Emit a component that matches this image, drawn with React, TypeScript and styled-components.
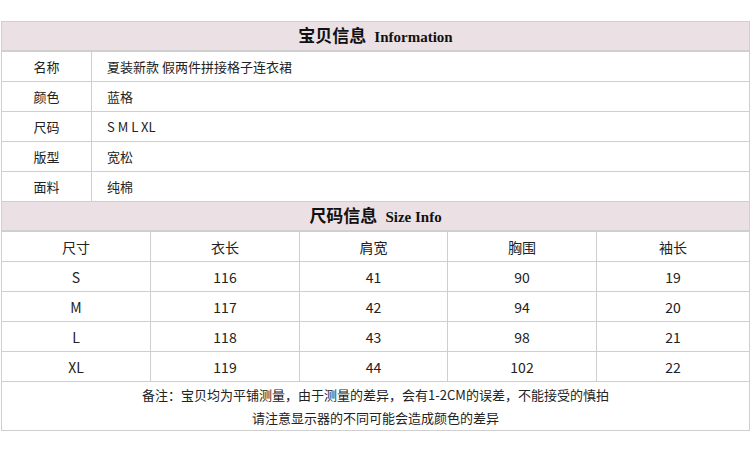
import styled, { createGlobalStyle } from 'styled-components'

const GlobalStyle = createGlobalStyle`
body {
  margin: 0;
  background: #fff;
  font-family: "Noto Sans CJK SC", "Noto Sans", sans-serif;
  color: #222;
}
`

const info = [
    ['名称', '夏装新款 假两件拼接格子连衣裙'],
    ['颜色', '蓝格'],
    ['尺码', 'S M L XL'],
    ['版型', '宽松'],
    ['面料', '纯棉'],
]

const sizeHead = ['尺寸', '衣长', '肩宽', '胸围', '袖长']

const sizes = [
    ['S', '116', '41', '90', '19'],
    ['M', '117', '42', '94', '20'],
    ['L', '118', '43', '98', '21'],
    ['XL', '119', '44', '102', '22'],
]

// column edges in the picture: 91 | 150 | 299 | 447 | 596
const colWidths = [90, 59, 149, 148, 149, 153]

const App = () => {
    return (
        <Page>
            <GlobalStyle />
            <Table>
                <colgroup>
                    {colWidths.map((w, i) => (
                        <col key={i} style={{ width: w }} />
                    ))}
                </colgroup>
                <tbody>
                    <tr>
                        <TitleCell colSpan={6}>
                            宝贝信息<En>Information</En>
                        </TitleCell>
                    </tr>
                    {info.map(([label, value]) => (
                        <tr key={label}>
                            <LabelCell>{label}</LabelCell>
                            <ValueCell colSpan={5}>{value}</ValueCell>
                        </tr>
                    ))}
                    <tr>
                        <TitleCell colSpan={6}>
                            尺码信息<En>Size Info</En>
                        </TitleCell>
                    </tr>
                    <tr>
                        {sizeHead.map((h, i) => (
                            <Cell key={h} colSpan={i === 0 ? 2 : 1}>{h}</Cell>
                        ))}
                    </tr>
                    {sizes.map((row) => (
                        <tr key={row[0]}>
                            {row.map((v, i) => (
                                <Cell key={i} colSpan={i === 0 ? 2 : 1}>{v}</Cell>
                            ))}
                        </tr>
                    ))}
                    <tr>
                        <NoteCell colSpan={6}>
                            <div>备注：宝贝均为平铺测量，由于测量的差异，会有1-2CM的误差，不能接受的慎拍</div>
                            <div>请注意显示器的不同可能会造成颜色的差异</div>
                        </NoteCell>
                    </tr>
                </tbody>
            </Table>
        </Page>
    )
}

export default App

const Page = styled.div`
width: 750px;
height: 458px;
padding: 21px 0 0 1px;
box-sizing: border-box;
`

const Table = styled.table`
width: 748px;
border-collapse: collapse;
table-layout: fixed;
font-size: 13px;
line-height: 18px;
`

const TitleCell = styled.td`
height: 28px;
padding: 0;
background: #ebe0e4;
border: 1px solid #cfcfcf;
border-bottom: 2px solid #cfcfcf;
text-align: center;
font-size: 17px;
font-weight: bold;
color: #111;
`

const En = styled.span`
font-family: "Liberation Serif", serif;
font-size: 15px;
font-weight: bold;
margin-left: 8px;
`

const LabelCell = styled.td`
height: 29px;
padding: 0;
border: 1px solid #cfcfcf;
text-align: center;
`

const ValueCell = styled.td`
height: 29px;
padding: 0 0 0 15px;
border: 1px solid #cfcfcf;
text-align: left;
`

const Cell = styled.td`
height: 29px;
padding: 0;
border: 1px solid #cfcfcf;
text-align: center;
font-size: 14px;
`

const NoteCell = styled.td`
padding: 1px 0 1px;
border: 1px solid #cfcfcf;
text-align: center;
line-height: 23px;
`
